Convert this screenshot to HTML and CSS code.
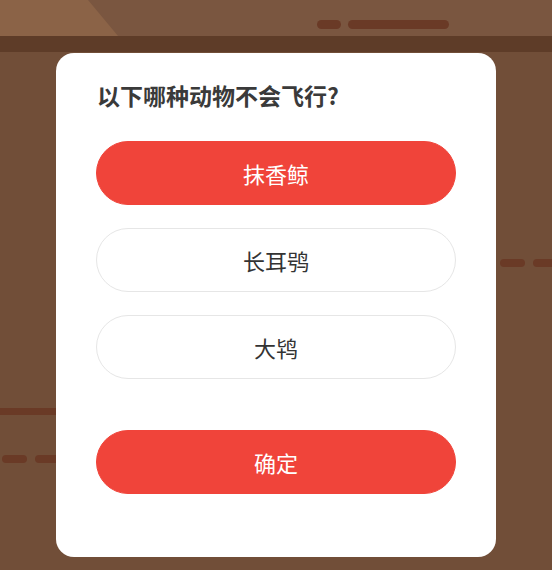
FILE: index.html
```html
<!DOCTYPE html>
<html lang="zh-CN">
<head>
<meta charset="utf-8">
<title>Quiz</title>
<link rel="stylesheet" href="styles.css">
</head>
<body>
<div class="scene">
  <header class="topbar">
    <div class="topbar-main">
      <span class="pill pill-short"></span>
      <span class="pill pill-long"></span>
    </div>
    <div class="topbar-band"></div>
  </header>
  <div class="decor decor-left-line"></div>
  <div class="decor decor-left-dash1"></div>
  <div class="decor decor-left-dash2"></div>
  <div class="decor decor-right-dash1"></div>
  <div class="decor decor-right-dash2"></div>
  <main class="card">
    <h1 class="question">以下哪种动物不会飞行?</h1>
    <div class="options">
      <button class="option option-selected">抹香鲸</button>
      <button class="option">长耳鸮</button>
      <button class="option">大鸨</button>
    </div>
    <button class="confirm">确定</button>
  </main>
</div>
</body>
</html>
```
FILE: styles.css
```css
* { box-sizing: border-box; }
html, body {
  margin: 0;
  padding: 0;
  background: #714e38;
  font-family: "Noto Sans CJK SC", "Noto Sans", sans-serif;
}
.scene {
  position: relative;
  width: 552px;
  height: 570px;
  overflow: hidden;
}
.topbar-main {
  height: 36px;
  background: #7a5640;
  position: relative;
  display: flex;
  align-items: flex-start;
  padding: 20px 0 0 317px;
  gap: 7px;
}
.topbar-main::before {
  content: "";
  position: absolute;
  left: 0; top: 0;
  width: 120px; height: 36px;
  background: #8b6347;
  clip-path: polygon(0 0, 88px 0, 118px 36px, 0 36px);
}
.pill {
  display: block;
  height: 9px;
  border-radius: 5px;
  background: #6a3a26;
  position: relative;
}
.pill-short { width: 24px; }
.pill-long { width: 101px; }
.topbar-band {
  height: 16px;
  background: #5e3c28;
}
.decor {
  position: absolute;
  background: #6a3a26;
  border-radius: 4px;
  z-index: 0;
}
.decor-left-line { left: 0; top: 408px; width: 60px; height: 7px; border-radius: 0; }
.decor-left-dash1 { left: 2px; top: 455px; width: 25px; height: 8px; }
.decor-left-dash2 { left: 35px; top: 455px; width: 25px; height: 8px; }
.decor-right-dash1 { left: 500px; top: 259px; width: 25px; height: 8px; }
.decor-right-dash2 { left: 533px; top: 259px; width: 25px; height: 8px; }
.card {
  position: relative;
  z-index: 1;
  margin: 1px 0 0 56px;
  width: 440px;
  height: 504px;
  background: #ffffff;
  border-radius: 18px;
  padding: 27px 40px 0 40px;
}
.question {
  margin: 0 0 0 1px;
  font-size: 23px;
  line-height: 30px;
  font-weight: 700;
  color: #3a3a3a;
}
.options {
  margin-top: 31px;
  display: flex;
  flex-direction: column;
  gap: 23px;
}
.option, .confirm {
  display: block;
  width: 360px;
  height: 64px;
  border-radius: 32px;
  font-family: "Noto Sans CJK SC", "Noto Sans", sans-serif;
  font-size: 22px;
  line-height: 30px;
  padding: 0;
  border: 1px solid #e6e6e6;
  background: #ffffff;
  color: #333333;
}
.option-selected, .confirm {
  background: #f0443a;
  border-color: #f0443a;
  color: #ffffff;
}
.confirm {
  margin-top: 51px;
}
```
